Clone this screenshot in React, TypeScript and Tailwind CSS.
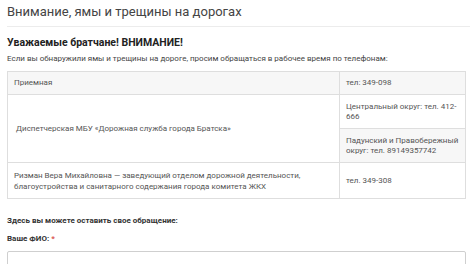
export default function App() {
  return (
    <div className="w-[470px] h-[264px] overflow-hidden bg-white font-['Roboto','Noto_Sans',sans-serif] text-[#333]">
      {/* Page heading */}
      <div className="ml-[7px] h-[27px] border-b border-[#ececec] flex items-center">
        <h1 className="text-[13px] leading-[16px] text-[#444] font-normal -mt-[3px]">
          Внимание, ямы и трещины на дорогах
        </h1>
      </div>

      <div className="pl-[7px] pr-[4px]">
        <h2 className="mt-[9px] text-[10.5px] leading-[14px] font-bold text-[#222]">
          Уважаемые братчане! ВНИМАНИЕ!
        </h2>
        <p className="mt-[4px] text-[8px] leading-[10px] text-[#444]">
          Если вы обнаружили ямы и трещины на дороге, просим обращаться в рабочее время по телефонам:
        </p>

        <table className="mt-[7px] w-[459px] border-collapse border border-[#dedede] text-[8px] leading-[10px] text-[#555]">
          <tbody>
            <tr className="bg-[#f7f7f7]">
              <td className="w-[332px] h-[23px] px-[6px] border border-[#dedede] align-middle">Приемная</td>
              <td className="h-[23px] px-[6px] border border-[#dedede] align-middle">тел: 349-098</td>
            </tr>
            <tr>
              <td rowSpan={2} className="px-[8px] border border-[#dedede] align-middle bg-white">
                Диспетчерская МБУ «Дорожная служба города Братска»
              </td>
              <td className="h-[34px] px-[6px] border border-[#dedede] align-middle bg-white">
                Центральный округ: тел. 412-666
              </td>
            </tr>
            <tr>
              <td className="h-[34px] px-[6px] border border-[#dedede] align-middle bg-[#f7f7f7]">
                Падунский и Правобережный округ: тел. 89149357742
              </td>
            </tr>
            <tr>
              <td className="h-[36px] px-[6px] border border-[#dedede] align-middle leading-[11px] bg-white">
                Ризман Вера Михайловна — заведующий отделом дорожной деятельности, благоустройства и санитарного содержания города комитета ЖКХ
              </td>
              <td className="h-[36px] px-[6px] border border-[#dedede] align-middle bg-white">тел. 349-308</td>
            </tr>
          </tbody>
        </table>

        <p className="mt-[17px] text-[8px] leading-[10px] font-bold text-[#333]">
          Здесь вы можете оставить свое обращение:
        </p>
        <label className="block mt-[8px] text-[8px] leading-[10px] font-bold text-[#333]">
          Ваше ФИО: <span className="text-[#d9534f]">*</span>
        </label>
        <input
          type="text"
          className="block mt-[7px] w-[459px] h-[16px] border border-[#cfcfcf] rounded-[2px] bg-white"
        />
      </div>
    </div>
  );
}
